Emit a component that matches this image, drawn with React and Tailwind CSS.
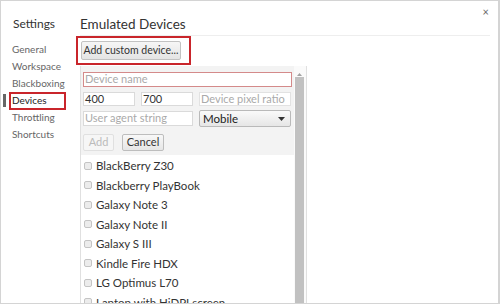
import React from "react";

const navItems = ["General", "Workspace", "Blackboxing", "Devices", "Throttling", "Shortcuts"];

const devices = [
  "BlackBerry Z30",
  "Blackberry PlayBook",
  "Galaxy Note 3",
  "Galaxy Note II",
  "Galaxy S III",
  "Kindle Fire HDX",
  "LG Optimus L70",
  "Laptop with HiDPI screen",
];

const font = { fontFamily: 'Lato, "Noto Sans", sans-serif' };

const Sidebar = () => (
  <div className="w-[79px] shrink-0 pt-[15px]">
    <div className="pl-[12px] text-[12px] leading-[16px] text-[#333]">Settings</div>
    <div className="mt-[9px] flex flex-col text-[10px]">
      {navItems.map((item) =>
        item === "Devices" ? (
          <div key={item} className="flex h-[17px] items-center">
            <span className="ml-[2px] h-[13px] w-[3px] bg-[#666]" />
            <span className="ml-[3px] flex h-[18px] w-[57px] items-center pl-[3px] text-[#222] ring-2 ring-inset ring-[#c9252b]">
              {item}
            </span>
          </div>
        ) : (
          <div key={item} className="flex h-[17px] items-center pl-[11px] text-[#666]">
            {item}
          </div>
        )
      )}
    </div>
  </div>
);

const Input = ({ className, placeholder, value }) => (
  <div
    className={`flex items-center whitespace-nowrap border bg-white px-[1px] text-[11px] ${value ? "text-[#333]" : "text-[#aaa]"} ${className}`}
  >
    {value || placeholder}
  </div>
);

const Form = () => (
  <div className="flex flex-col bg-[#f3f3f3] pl-[2px] pt-[6px] pb-[4px]">
    <Input className="h-[15px] w-[209px] border-[#d48a8a]" placeholder="Device name" />
    <div className="mt-[5px] flex gap-[6px]">
      <Input className="h-[14px] w-[52px] border-[#dadada]" value="400" />
      <Input className="h-[14px] w-[52px] border-[#dadada]" value="700" />
      <Input className="h-[14px] w-[92px] border-[#e2e2e2]" placeholder="Device pixel ratio" />
    </div>
    <div className="mt-[4px] flex items-center gap-[6px]">
      <Input className="h-[15px] w-[110px] border-[#dadada]" placeholder="User agent string" />
      <div className="flex h-[17px] w-[92px] items-center justify-between rounded-[2px] border border-[#b9b9b9] bg-gradient-to-b from-[#fafafa] to-[#e6e6e6] pl-[3px] pr-[5px] text-[11.5px] text-[#222]">
        Mobile
        <svg width="7" height="4" viewBox="0 0 7 4">
          <path d="M0 0h7L3.5 4z" fill="#333" />
        </svg>
      </div>
    </div>
    <div className="mt-[7px] flex gap-[8px]">
      <div className="flex h-[17px] w-[31px] items-center justify-center rounded-[2px] border border-[#e0e0e0] bg-[#f6f6f6] text-[11px] text-[#bbb]">
        Add
      </div>
      <div className="flex h-[17px] w-[42px] items-center justify-center rounded-[2px] border border-[#bdbdbd] bg-gradient-to-b from-[#f8f8f8] to-[#e6e6e6] text-[11px] text-[#333]">
        Cancel
      </div>
    </div>
  </div>
);

const DeviceList = () => (
  <div className="flex flex-col pt-[1px]">
    {devices.map((d) => (
      <div key={d} className="flex h-[19.5px] shrink-0 items-center text-[11.5px] text-[#333]">
        <span className="ml-[3px] h-[8px] w-[8px] rounded-[2px] border border-[#c4c4c4] bg-[#ececec]" />
        <span className="ml-[4px] whitespace-nowrap">{d}</span>
      </div>
    ))}
  </div>
);

const Scrollbar = () => (
  <div className="flex w-[12px] shrink-0 flex-col items-start bg-[#fafafa]">
    <div className="flex h-[10px] w-[10px] items-end justify-center">
      <svg width="5" height="3" viewBox="0 0 5 3">
        <path d="M0 3h5L2.5 0z" fill="#a3a3a3" />
      </svg>
    </div>
    <div className="ml-[1px] mt-[1px] w-[9px] flex-1 bg-[#c1c1c1]" />
  </div>
);

export default function App() {
  return (
    <div
      className="relative flex h-[304px] w-[500px] overflow-hidden border border-r-2 border-[#d4d4d4] bg-white text-[11px]"
      style={font}
    >
      <Sidebar />
      <div className="flex min-w-0 flex-1 flex-col">
        <div className="mr-[8px] h-[35px] shrink-0 border-b border-[#eeeeee] pt-[15px] text-[13.5px] leading-[16px] text-[#333]">
          Emulated Devices
        </div>
        <div className="-ml-[4px] flex h-[29px] w-[115px] shrink-0 border-2 border-[#c9252b] pl-[3px] pt-[3px]">
          <div className="flex h-[19px] w-[100px] items-center justify-center whitespace-nowrap rounded-[2px] border border-[#c2c2c2] bg-gradient-to-b from-[#f6f6f6] to-[#e4e4e4] text-[10.5px] text-[#333]">
            Add custom device...
          </div>
        </div>
        <div className="mt-[1px] flex min-h-0 w-[227px] flex-1 border-l border-r border-[#e0e0e0]">
          <div className="flex min-w-0 flex-1 flex-col">
            <Form />
            <DeviceList />
          </div>
          <Scrollbar />
        </div>
      </div>
      <span className="absolute right-[9px] top-[5px] text-[11px] leading-[12px] text-[#666]">×</span>
    </div>
  );
}
